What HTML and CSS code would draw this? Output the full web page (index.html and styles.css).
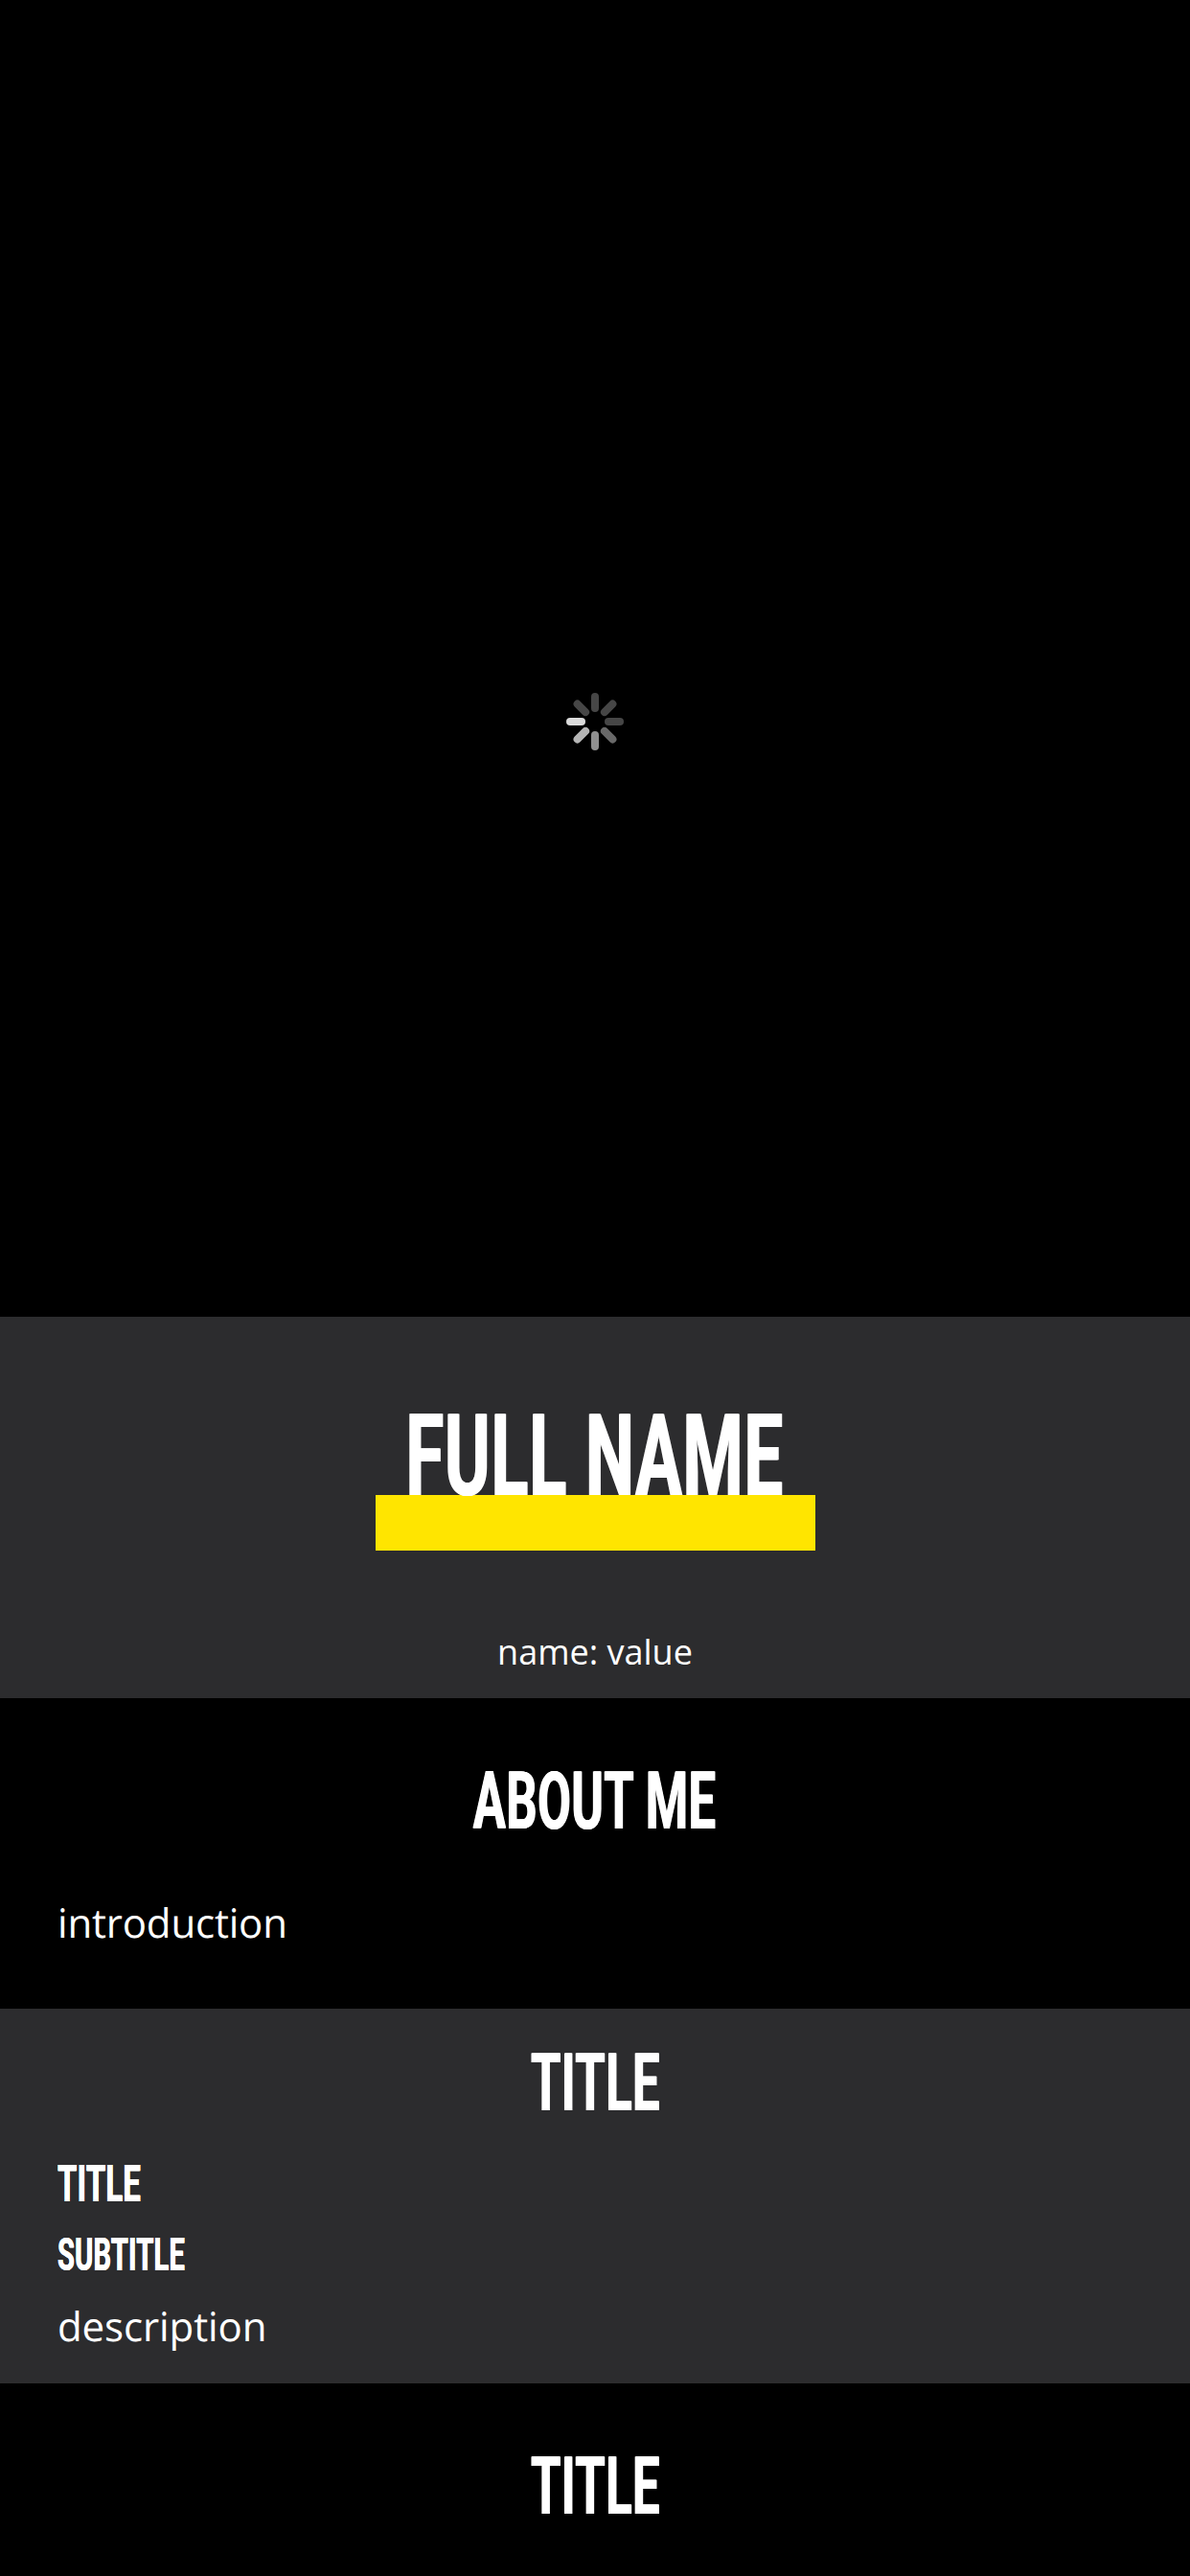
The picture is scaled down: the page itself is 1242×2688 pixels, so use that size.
FILE: index.html
```html
<!DOCTYPE html>
<html lang="en">
<head>
<meta charset="utf-8">
<title>Profile</title>
<link rel="stylesheet" href="styles.css">
</head>
<body>
<main class="page">
  <section class="photo">
    <svg class="spinner" viewBox="-30 -30 60 60" fill="none" stroke-width="8" stroke-linecap="round" role="img" aria-label="Loading">
      <g stroke="#464646">
        <path d="M0-14V-26"/>
        <path d="M0-14V-26" transform="rotate(45)"/>
        <path d="M0-14V-26" transform="rotate(90)"/>
        <path d="M0-14V-26" transform="rotate(315)"/>
      </g>
      <path d="M0-14V-26" stroke="#696969" transform="rotate(135)"/>
      <path d="M0-14V-26" stroke="#8f8f8f" transform="rotate(180)"/>
      <path d="M0-14V-26" stroke="#b5b5b5" transform="rotate(225)"/>
      <path d="M0-14V-26" stroke="#dadada" transform="rotate(270)"/>
    </svg>
  </section>
  <section class="identity">
    <h1 class="name"><span class="condensed">FULL NAME</span></h1>
    <div class="bar"></div>
    <p class="attribute">name: value</p>
  </section>
  <section class="about">
    <h2 class="heading"><span class="condensed">ABOUT ME</span></h2>
    <p class="body-text">introduction</p>
  </section>
  <section class="entry">
    <h2 class="heading"><span class="condensed">TITLE</span></h2>
    <h3 class="entry-title"><span class="condensed">TITLE</span></h3>
    <h4 class="entry-subtitle"><span class="condensed">SUBTITLE</span></h4>
    <p class="body-text">description</p>
  </section>
  <section class="next">
    <h2 class="heading"><span class="condensed">TITLE</span></h2>
  </section>
</main>
</body>
</html>
```
FILE: styles.css
```css
* { box-sizing: border-box; }
body { margin: 0; background: #000; color: #fff; font-family: "Open Sans", sans-serif; }
h1, h2, h3, h4, p { margin: 0; white-space: nowrap; }
.page { height: 2688px; overflow: hidden; }
.photo { height: 1374px; padding-top: 723px; display: flex; justify-content: center; }
.spinner { width: 60px; height: 60px; }
h1, h2, h3, h4 { font-family: Roboto, sans-serif; font-weight: 700; letter-spacing: 0.008em; }
.condensed {
  display: inline-block;
  transform: scaleX(0.611);
  text-shadow: 0.01em 0 0 #fff, -0.01em 0 0 #fff;
}
.identity { height: 398px; padding-top: 87px; background: #2c2c2e; display: flex; flex-direction: column; align-items: center; }
.name { font-size: 118px; line-height: 118px; letter-spacing: 0.012em; position: relative; z-index: 1; }
.bar { width: 459px; height: 58px; margin-top: -19px; background: #ffe500; }
.attribute { font-size: 36px; line-height: 50px; margin-top: 81px; }
.about { height: 324px; padding-top: 66px; }
.heading { font-size: 83px; line-height: 84px; text-align: center; }
.body-text { font-size: 42px; line-height: 58px; padding-left: 60px; letter-spacing: -0.1px; text-rendering: geometricPrecision; }
.about .body-text { margin-top: 56px; letter-spacing: -0.18px; }
.entry { height: 391px; padding-top: 36px; background: #2c2c2e; }
.entry-title, .entry-subtitle { padding-left: 60px; }
.entry-title .condensed, .entry-subtitle .condensed { transform-origin: left; }
.entry-title { font-size: 53.5px; line-height: 54px; margin-top: 36px; }
.entry-subtitle { font-size: 47.5px; line-height: 48px; margin-top: 23px; }
.entry .body-text { margin-top: 22px; }
.next { padding-top: 66px; }
```
